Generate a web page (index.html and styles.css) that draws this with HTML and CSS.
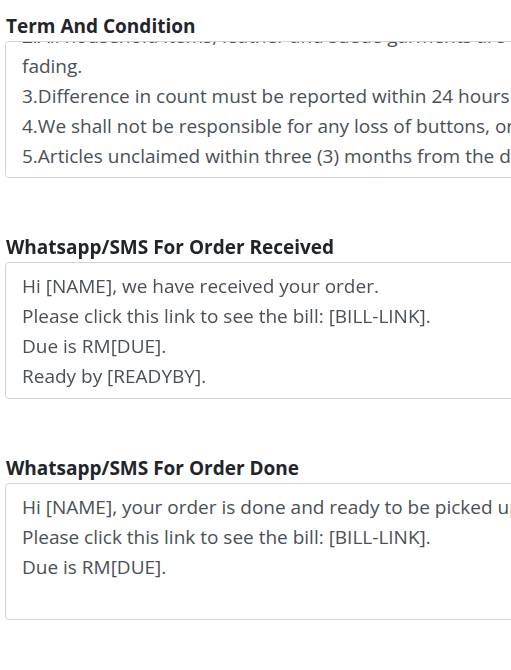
FILE: index.html
```html
<!DOCTYPE html>
<html lang="en">
<head>
  <meta charset="UTF-8" />
  <meta name="viewport" content="width=device-width, initial-scale=1.0"/>
  <title>Settings - Messages</title>
  <link rel="stylesheet" href="styles.css">
</head>
<body>
  <div class="settings">
    <div class="form-group">
      <label for="terms">Term And Condition</label>
      <textarea id="terms" class="form-control" rows="4">1.All garments are accepted at owner's risk of damage in the normal process of cleaning.
2.All household items, leather and suede garments are accepted at owner's risk of shrinkage or colour
fading.
3.Difference in count must be reported within 24 hours of delivery, otherwise no claims will be entertained.
4.We shall not be responsible for any loss of buttons, ornaments or articles left in pockets.
5.Articles unclaimed within three (3) months from the date of collection will be disposed of.</textarea>
    </div>

    <div class="form-group">
      <label for="msg-received">Whatsapp/SMS For Order Received</label>
      <textarea id="msg-received" class="form-control" rows="4">Hi [NAME], we have received your order.
Please click this link to see the bill: [BILL-LINK].
Due is RM[DUE].
Ready by [READYBY].</textarea>
    </div>

    <div class="form-group">
      <label for="msg-done">Whatsapp/SMS For Order Done</label>
      <textarea id="msg-done" class="form-control" rows="4">Hi [NAME], your order is done and ready to be picked up at our outlet.
Please click this link to see the bill: [BILL-LINK].
Due is RM[DUE].</textarea>
    </div>
  </div>

  <script>
    // terms box is shown scrolled to the end
    const terms = document.getElementById('terms');
    terms.scrollTop = terms.scrollHeight;
  </script>
</body>
</html>
```

FILE: styles.css
```css
* {
  box-sizing: border-box;
}

html, body {
  overflow: hidden;
}

body {
  margin: 0;
  padding: 0;
  background: #fff;
  color: #212529;
  font-family: 'Open Sans', 'Segoe UI', sans-serif;
}

.settings {
  padding: 14px 5px 0 5px;
}

.form-group {
  margin-bottom: 57px;
}

label {
  display: block;
  padding-left: 1px;
  font-size: 19px;
  font-weight: bold;
  line-height: 24px;
  margin-bottom: 3px;
}

.form-control {
  display: block;
  width: 980px;
  height: 137px;
  padding: 8px 16px 6px 16px;
  font-family: inherit;
  font-size: 19px;
  line-height: 30px;
  color: #495057;
  background: #fff;
  border: 1px solid #ced4da;
  border-radius: 4px;
  resize: vertical;
  outline: none;
}
```
